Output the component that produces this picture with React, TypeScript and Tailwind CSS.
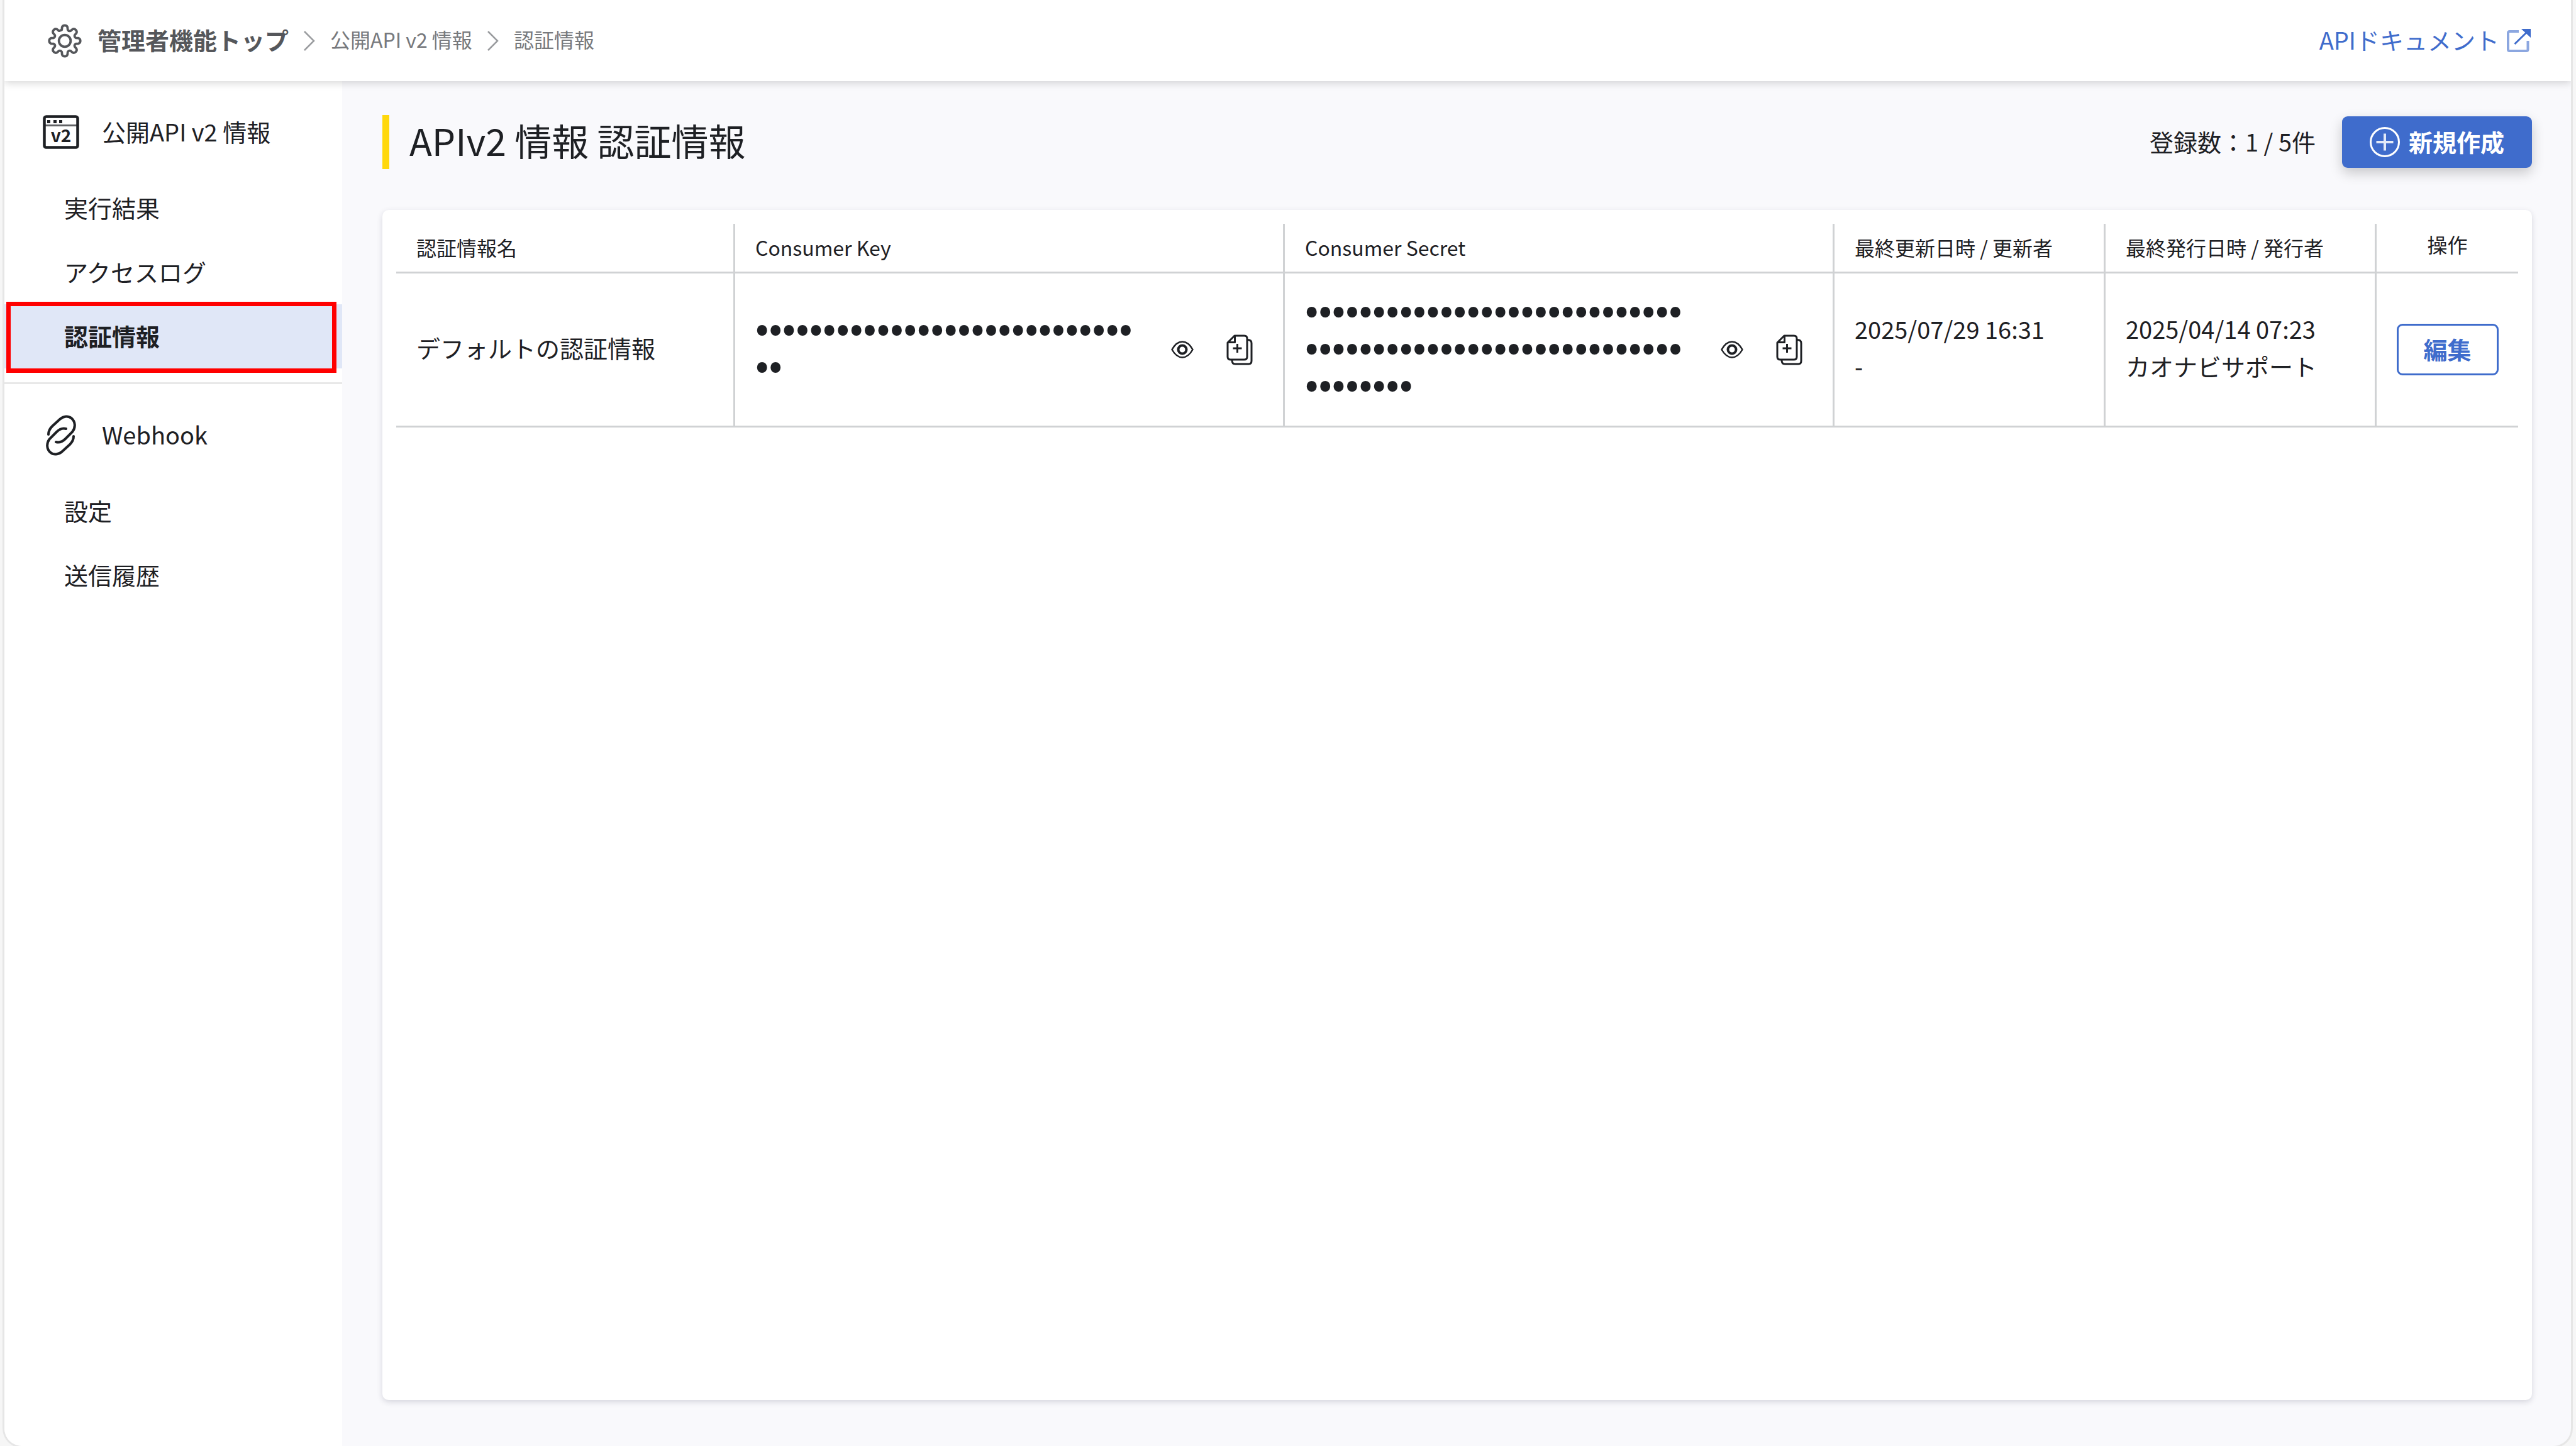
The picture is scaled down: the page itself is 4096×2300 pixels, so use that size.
import { Fragment, useState } from "react";
import type { ReactNode } from "react";

const MENU = [
  {
    title: "公開API v2 情報",
    icon: <ApiIcon />,
    items: ["実行結果", "アクセスログ", "認証情報"],
  },
  {
    title: "Webhook",
    icon: <LinkIcon />,
    items: ["設定", "送信履歴"],
  },
];

const CREDENTIALS = [
  {
    name: "デフォルトの認証情報",
    keyLength: 30,
    secretLength: 64,
    updatedAt: "2025/07/29 16:31",
    updatedBy: "-",
    issuedAt: "2025/04/14 07:23",
    issuedBy: "カオナビサポート",
  },
];

// One tooth every 45 degrees
function gearPath() {
  const pt = (r: number, deg: number) => {
    const a = ((deg - 90) * Math.PI) / 180;
    return `${(30 + r * Math.cos(a)).toFixed(2)} ${(30 + r * Math.sin(a)).toFixed(2)}`;
  };
  let d = "";
  for (let i = 0; i < 8; i++) {
    const c = i * 45;
    d += `${i === 0 ? "M" : "A4 4 0 0 0 "}${pt(19.5, c - 15)}`;
    d += `L${pt(24, c - 11)}A4.8 4.2 ${c} 0 1 ${pt(24, c + 11)}L${pt(19.5, c + 15)}`;
  }
  return d + "Z";
}

function GearIcon() {
  return (
    <svg viewBox="0 0 60 60" className="size-14" fill="none" stroke="currentColor" strokeWidth="4" strokeLinejoin="round" aria-hidden="true">
      <path d={gearPath()} />
      <circle cx="30" cy="30" r="10" />
    </svg>
  );
}

function ChevronIcon() {
  return (
    <svg viewBox="0 0 18 32" className="h-8 w-[18px] text-[#9a9c9f]" fill="none" stroke="currentColor" strokeWidth="2.5" aria-hidden="true">
      <path d="M1 1 16 16 1 31" />
    </svg>
  );
}

function ExternalIcon() {
  return (
    <svg viewBox="0 0 38 38" className="size-[38px]" fill="none" stroke="currentColor" aria-hidden="true">
      <path d="M19 4H4.5Q2 4 2 6.500V32.500Q2 35 4.500 35H31Q33.500 35 33.500 32.500V19" strokeWidth="4" opacity="0.6" />
      <path d="M12.500 24 32 5" strokeWidth="3" />
      <path d="M23 0H38V14Z" fill="currentColor" stroke="none" />
    </svg>
  );
}

function ApiIcon() {
  return (
    <svg viewBox="0 0 58 54" className="h-[54px] w-[58px]" fill="none" stroke="currentColor" aria-hidden="true">
      <rect x="2.500" y="2.500" width="53" height="49" rx="3" strokeWidth="4.500" />
      <path d="M4 16.500H54" strokeWidth="3" opacity="0.7" />
      <path d="M7 10.500H12M17 10.500H22M26 10.500H31" strokeWidth="5" />
      <text x="29" y="43" textAnchor="middle" fontSize="28" fontWeight="700" fill="currentColor" stroke="none">
        v2
      </text>
    </svg>
  );
}

function LinkIcon() {
  return (
    <svg viewBox="0 0 48 65" className="h-[65px] w-12" fill="none" stroke="currentColor" strokeWidth="4" strokeLinecap="round" aria-hidden="true">
      <path d="M4 31C4 26 6 22 10 18L22 7C28 1.500 36 1 41 5.500C47 11 47.500 20 42 27L31 38C26 43 20 44 16 43" />
      <path d="M44 34C44 39 42 43 38 47L26 58C20 63.500 12 64 7 59.500C1 54 .5 45 6 38L17 27C22 22 28 21 32 22" />
    </svg>
  );
}

function PlusCircleIcon() {
  return (
    <svg viewBox="0 0 48 48" className="size-12" fill="none" stroke="currentColor" aria-hidden="true">
      <circle cx="24" cy="24" r="22.500" strokeWidth="3" />
      <path d="M24 10.500V37.500M10.500 24H37.500" strokeWidth="4" opacity="0.85" />
    </svg>
  );
}

function EyeIcon() {
  return (
    <svg viewBox="0 0 36 28" className="h-7 w-9" fill="none" stroke="currentColor" strokeLinejoin="round" aria-hidden="true">
      <path d="M1.500 14C6 6 12 1.500 18 1.500S30 6 34.500 14C30 22 24 26.500 18 26.500S6 22 1.500 14Z" strokeWidth="2.500" />
      <circle cx="18" cy="14" r="6.500" strokeWidth="4" />
    </svg>
  );
}

function CopyIcon() {
  return (
    <svg viewBox="0 0 42 49" className="h-[49px] w-[42px]" fill="none" stroke="currentColor" strokeWidth="3" strokeLinejoin="round" aria-hidden="true">
      <path d="M13 2H28.500Q33 2 33 6.500V35.500Q33 40 28.500 40H6.500Q2 40 2 35.500V13Z" />
      <path d="M13.500 3V12.500H3" />
      <path d="M34 8.500Q40 8.500 40 14V42Q40 47 35.500 47H14Q9 47 9 41" />
      <path d="M17.500 15V29M10.500 22H24.500" />
    </svg>
  );
}

function Sidebar() {
  const [active, setActive] = useState("認証情報");

  return (
    <aside className="w-[537px] shrink-0 bg-white">
      {MENU.map((section, i) => (
        <Fragment key={section.title}>
          {i > 0 && <hr className="border-t-[3px] border-[#e8e8e8]" />}
          <section className="pb-[22px]">
            <h2 className="flex items-center gap-9 pt-[33px] pb-[22px] pl-[61px]">
              <span className="flex h-24 w-[58px] items-center justify-center">{section.icon}</span>
              <span className="pb-1">{section.title}</span>
            </h2>
            <ul>
              {section.items.map((item) => (
                <li key={item} className={item === active ? "relative bg-[#e0e7f7]" : ""}>
                  <a
                    href="#"
                    onClick={() => setActive(item)}
                    className={`flex h-[102px] items-center pb-1 pl-[95px] ${item === active ? "font-bold" : ""}`}
                  >
                    {item}
                  </a>
                  {item === active && (
                    <span className="pointer-events-none absolute -top-1 right-[9px] -bottom-[7px] left-[3px] border-[7px] border-[#ff0000]" />
                  )}
                </li>
              ))}
            </ul>
          </section>
        </Fragment>
      ))}
    </aside>
  );
}

function Th({ children, className = "" }: { children: ReactNode; className?: string }) {
  return (
    <th scope="col" className={`h-[79px] border-b-[3px] border-[#d0d2d4] px-8 text-[32px] font-normal whitespace-nowrap ${className}`}>
      {children}
    </th>
  );
}

function Td({ children, className = "" }: { children: ReactNode; className?: string }) {
  return <td className={`border-b-[3px] border-[#d0d2d4] ${className}`}>{children}</td>;
}

function SecretField({ label, length }: { label: string; length: number }) {
  return (
    <div className="flex items-center">
      <p className="mr-[46px] min-w-0 flex-1 pb-5 text-[63px] break-all">{"•".repeat(length)}</p>
      <div className="flex items-center gap-[52px]">
        <button type="button" aria-label={`${label}を表示`}>
          <EyeIcon />
        </button>
        <button type="button" aria-label={`${label}をコピー`}>
          <CopyIcon />
        </button>
      </div>
    </div>
  );
}

function CredentialTable() {
  return (
    <table className="w-full table-fixed border-separate border-spacing-0">
      <thead>
        <tr>
          <Th className="w-[539px] border-r-[3px] pb-0.5 text-left">認証情報名</Th>
          <Th className="border-r-[3px] pb-0.5 text-left">Consumer Key</Th>
          <Th className="border-r-[3px] pb-0.5 text-left">Consumer Secret</Th>
          <Th className="w-[431px] border-r-[3px] pb-0.5 text-left">最終更新日時 / 更新者</Th>
          <Th className="w-[431px] border-r-[3px] pb-0.5 text-left">最終発行日時 / 発行者</Th>
          <Th className="w-[225px] pb-3 text-center">操作</Th>
        </tr>
      </thead>
      <tbody>
        {CREDENTIALS.map((row) => (
          <tr key={row.name} className="h-[245px]">
            <Td className="border-r-[3px] px-8 pb-2">{row.name}</Td>
            <Td className="border-r-[3px] pr-12 pl-8">
              <SecretField label="Consumer Key" length={row.keyLength} />
            </Td>
            <Td className="border-r-[3px] pr-12 pl-8">
              <SecretField label="Consumer Secret" length={row.secretLength} />
            </Td>
            <Td className="border-r-[3px] px-8 pb-2">
              {row.updatedAt}
              <br />
              {row.updatedBy}
            </Td>
            <Td className="border-r-[3px] px-8 pb-2">
              {row.issuedAt}
              <br />
              {row.issuedBy}
            </Td>
            <Td className="text-center">
              <button type="button" className="h-[82px] w-[162px] rounded-[9px] border-[3px] border-[#3f6ccc] pb-1 font-bold text-[#3f6ccc]">
                編集
              </button>
            </Td>
          </tr>
        ))}
      </tbody>
    </table>
  );
}

export default function App() {
  return (
    <div className="flex min-h-screen bg-[#f6f6f6] pr-2 pl-[7px] font-['Noto_Sans_CJK_JP',sans-serif] text-[38px] leading-[59px] text-[#1e2024]">
      <div className="flex flex-1 flex-col overflow-hidden rounded-b-[28px] bg-[#f9f9fc] ring-[3px] ring-[#e6e6e6]">
        <header className="relative flex h-[129px] items-center justify-between bg-white pr-16 pl-[68px] shadow-[0_3px_12px_rgba(0,0,0,0.16)]">
          <nav className="flex items-center gap-6 text-[32px] text-[#77797d]">
            <a href="#" className="flex items-center gap-6 text-[38px] font-bold text-[#55575b]">
              <GearIcon />
              <span className="pb-1">管理者機能トップ</span>
            </a>
            <ChevronIcon />
            <a href="#" className="pb-1">
              公開API v2 情報
            </a>
            <ChevronIcon />
            <span className="pb-1">認証情報</span>
          </nav>
          <a href="#" className="flex items-center gap-3 text-[#3f6ccc]">
            <span className="pb-1">APIドキュメント</span>
            <ExternalIcon />
          </a>
        </header>

        <div className="flex flex-1">
          <Sidebar />
          <main className="flex min-w-0 flex-1 flex-col pt-[54px] pr-[62px] pb-[73px] pl-16">
            <div className="mb-[65px] flex items-center justify-between">
              <h1 className="flex h-[86px] items-center border-l-[11px] border-[#ffd80c] pb-2 pl-8 text-[59px]">APIv2 情報 認証情報</h1>
              <div className="flex items-center gap-[42px]">
                <p className="pb-1">登録数：1 / 5件</p>
                <button
                  type="button"
                  className="flex h-[82px] w-[302px] items-center justify-center gap-3.5 rounded-[9px] bg-[#3f6ccc] font-bold text-white shadow-[0_8px_20px_rgba(0,0,0,0.2)]"
                >
                  <PlusCircleIcon />
                  <span className="pb-1">新規作成</span>
                </button>
              </div>
            </div>

            <div className="flex-1 rounded-[10px] bg-white p-[22px] shadow-[0_3px_10px_rgba(30,32,60,0.16)]">
              <CredentialTable />
            </div>
          </main>
        </div>
      </div>
    </div>
  );
}
